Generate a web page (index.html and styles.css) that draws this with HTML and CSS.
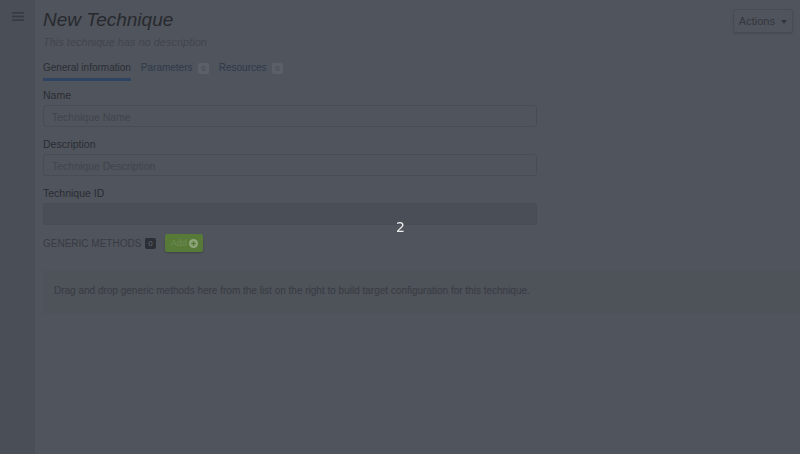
FILE: index.html
```html
<!DOCTYPE html>
<html lang="en">
<head>
    <meta charset="UTF-8">
    <meta name="viewport" content="width=device-width, initial-scale=1.0">
    <title>New Technique</title>
    <link rel="stylesheet" href="styles.css">
</head>
<body>
    <div class="app">
        <aside class="sidebar">
            <svg class="burger" width="12" height="9" viewBox="0 0 12 9">
                <rect x="0" y="0" width="12" height="1.6" fill="#363a41"/>
                <rect x="0" y="3.7" width="12" height="1.6" fill="#363a41"/>
                <rect x="0" y="7.4" width="12" height="1.6" fill="#363a41"/>
            </svg>
        </aside>

        <main class="main">
            <div class="header">
                <div>
                    <h1>New Technique</h1>
                    <p class="desc">This technique has no description</p>
                </div>
                <button class="actions">Actions <span class="caret"></span></button>
            </div>

            <nav class="tabs">
                <span class="tab active">General information</span>
                <span class="tab">Parameters <span class="tab-badge">0</span></span>
                <span class="tab">Resources <span class="tab-badge">0</span></span>
            </nav>

            <div class="form">
                <label>Name</label>
                <div class="input">Technique Name</div>

                <label>Description</label>
                <div class="input">Technique Description</div>

                <label>Technique ID</label>
                <div class="input disabled"></div>
            </div>

            <div class="methods">
                <span class="methods-title">GENERIC METHODS</span>
                <span class="count">0</span>
                <button class="add">Add
                    <svg width="9" height="9" viewBox="0 0 10 10">
                        <circle cx="5" cy="5" r="5" fill="#8ea57c"/>
                        <rect x="2.3" y="4.2" width="5.4" height="1.6" fill="#587a38"/>
                        <rect x="4.2" y="2.3" width="1.6" height="5.4" fill="#587a38"/>
                    </svg>
                </button>
            </div>

            <div class="dropzone">
                Drag and drop generic methods here from the list on the right to build target configuration for this technique.
            </div>
        </main>
    </div>

    <div class="counter">2</div>
</body>
</html>
```

FILE: styles.css
```css
body {
    margin: 0;
    background: #50545c;
    font-family: "Liberation Sans", Arial, sans-serif;
    color: #2c2f35;
}
.app {
    display: flex;
    min-height: 454px;
}
.sidebar {
    width: 35px;
    flex-shrink: 0;
    background: #4a4e56;
    display: flex;
    justify-content: center;
    padding-top: 12px;
    box-sizing: border-box;
}
.burger {
    display: block;
}
.main {
    flex: 1;
    padding: 8px 7px 0 8px;
}
.header {
    display: flex;
    justify-content: space-between;
    align-items: flex-start;
}
h1 {
    margin: 0;
    font-size: 19px;
    font-weight: normal;
    font-style: italic;
    color: #27292e;
    line-height: 24px;
}
.desc {
    margin: 4px 0 0;
    font-size: 11px;
    font-style: italic;
    color: #42454c;
}
.actions {
    margin-top: 1px;
    background: #50545c;
    border: 1px solid #474b52;
    border-radius: 3px;
    color: #33363c;
    font-family: "Liberation Sans", Arial, sans-serif;
    font-size: 11px;
    padding: 5px 5px 5px 5px;
    box-shadow: 0 1px 2px rgba(0, 0, 0, 0.12);
}
.caret {
    display: inline-block;
    margin-left: 3px;
    vertical-align: middle;
    border-top: 4px solid #33363c;
    border-left: 3px solid transparent;
    border-right: 3px solid transparent;
}
.tabs {
    display: flex;
    gap: 10px;
    margin-top: 14px;
    font-size: 10px;
}
.tab {
    color: #2e3a4c;
    padding-bottom: 5px;
}
.tab.active {
    color: #2b2e34;
    border-bottom: 3px solid #2f4460;
}
.tab-badge {
    display: inline-block;
    background: #5b5f67;
    color: #454850;
    font-size: 8px;
    padding: 1px 3px;
    border-radius: 2px;
    margin-left: 3px;
}
.form {
    width: 494px;
    display: flex;
    flex-direction: column;
    margin-top: 8px;
}
label {
    font-size: 10.5px;
    color: #2a2d33;
    margin-bottom: 4px;
}
.input {
    height: 22px;
    border: 1px solid #484c54;
    border-radius: 3px;
    box-sizing: border-box;
    padding: 5px 8px;
    font-size: 10.5px;
    color: #41444b;
    margin-bottom: 11px;
}
.input.disabled {
    background: #4a4e56;
    margin-bottom: 9px;
}
.methods {
    display: flex;
    align-items: center;
}
.methods-title {
    font-size: 10px;
    color: #383b42;
}
.count {
    background: #2c2f35;
    color: #666a72;
    font-size: 8px;
    padding: 1px 3px;
    border-radius: 2px;
    margin-left: 4px;
}
.add {
    margin-left: 9px;
    background: #587a38;
    border: none;
    border-radius: 2px;
    color: #6f8a58;
    font-family: "Liberation Sans", Arial, sans-serif;
    font-size: 9px;
    padding: 4px 5px 4px 6px;
    display: flex;
    align-items: center;
    gap: 2px;
    box-shadow: 0 1px 2px rgba(0, 0, 0, 0.25);
}
.dropzone {
    margin-top: 18px;
    margin-right: -7px;
    background: #4e5259;
    padding: 15px 11px 18px;
    font-size: 10px;
    color: #383b42;
}
.counter {
    position: fixed;
    left: 396px;
    top: 219px;
    color: #ececec;
    font-family: "DejaVu Sans", sans-serif;
    font-size: 14px;
}
```
